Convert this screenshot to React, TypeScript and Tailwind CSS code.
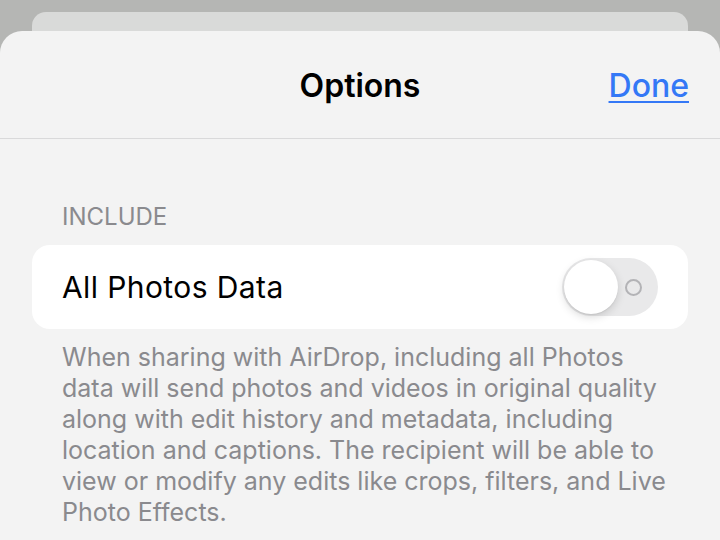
import React, { useState } from 'react';

const Toggle: React.FC<{ on: boolean; onChange: (v: boolean) => void }> = ({ on, onChange }) => {
    return (
        <button
            onClick={() => onChange(!on)}
            className={`relative w-[96px] h-[58px] rounded-full flex items-center ${on ? 'bg-[#34c759]' : 'bg-[#e9e9ea]'}`}
        >
            {!on && (
                <span className="absolute right-[16px] top-[21px] w-[17px] h-[17px] rounded-full border-[2px] border-[#b3b3b6]" />
            )}
            <span
                className={`absolute top-[2px] w-[54px] h-[54px] rounded-full bg-white shadow-[0_3px_8px_rgba(0,0,0,0.15),0_1px_1px_rgba(0,0,0,0.06)] ${on ? 'left-[40px]' : 'left-[2px]'}`}
            />
        </button>
    );
};

const App: React.FC = () => {
    const [allData, setAllData] = useState(false);

    return (
        <div className="h-[540px] w-[720px] overflow-hidden bg-[#b5b6b4] pt-[12px]" style={{ fontFamily: 'Inter, "Noto Sans", sans-serif' }}>
            {/* sheet behind */}
            <div className="mx-[32px] h-[19px] rounded-t-[14px] bg-[#d9dad9]" />
            <div className="h-[600px] rounded-t-[22px] bg-[#f3f3f3]">
                <div className="relative h-[108px] flex items-center justify-center border-b border-[#d9d9da]">
                    <h1 className="text-[32px] leading-[40px] font-semibold text-black mt-[2px]">Options</h1>
                    <button className="absolute right-[31px] top-[35px] text-[32px] leading-[40px] font-medium text-[#3478f6] underline underline-offset-[4px] decoration-[2px]">
                        Done
                    </button>
                </div>

                <div className="pt-[64px] px-[32px]">
                    <div className="px-[30px] text-[24px] text-[#8a8a8e] leading-[28px]">INCLUDE</div>
                    <div className="mt-[14px] h-[84px] rounded-[18px] bg-white flex items-center justify-between pl-[30px] pr-[30px]">
                        <span className="text-[30px] text-black tracking-[0.4px]">All Photos Data</span>
                        <Toggle on={allData} onChange={setAllData} />
                    </div>
                    <p className="mt-[13px] pl-[30px] pr-[20px] text-[25px] leading-[31px] text-[#8a8a8e]">
                        When sharing with AirDrop, including all Photos data will send photos and videos in original quality along with edit history and metadata, including location and captions. The recipient will be able to view or modify any edits like crops, filters, and Live Photo Effects.
                    </p>
                </div>
            </div>
        </div>
    );
};

export default App;
